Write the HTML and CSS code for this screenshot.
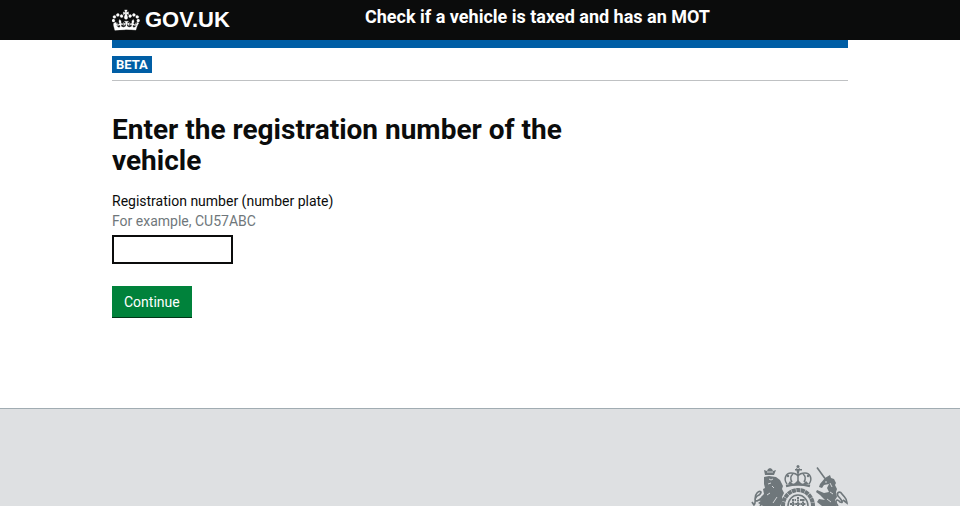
FILE: index.html
```
<!DOCTYPE html>
<html lang="en">
<head>
<meta charset="utf-8">
<meta name="viewport" content="width=device-width, initial-scale=1">
<title>Check if a vehicle is taxed and has an MOT</title>
<link rel="stylesheet" href="styles.css">
</head>
<body>
<header class="header">
  <div class="container header-row">
    <a class="logo" href="#">
      <svg class="crown" viewBox="0 3 36 28" aria-hidden="true"><path fill="currentColor" stroke="currentColor" stroke-width=".4" d="M6.7 12.2c1 .4 2.1-.1 2.5-1s-.1-2.1-1-2.5c-1-.4-2.1.1-2.5 1-.4 1 0 2.1 1 2.5m-4.3 2.5c1 .4 2.1-.1 2.5-1s-.1-2.1-1-2.5c-1-.4-2.1.1-2.5 1-.5 1 0 2.1 1 2.5m-1.3 4.800c1 .4 2.1-.1 2.5-1 .4-1-.1-2.1-1-2.5-1-.4-2.1.1-2.5 1-.4 1 0 2.1 1 2.5m10.4-5.800c1 .4 2.1-.1 2.5-1s-.1-2.1-1-2.5c-1-.4-2.1.1-2.5 1s0 2.1 1 2.5m17.4-1.5c-1 .4-2.1-.1-2.5-1s.1-2.1 1-2.5c1-.4 2.1.1 2.5 1 .5 1 0 2.1-1 2.5m4.3 2.5c-1 .4-2.1-.1-2.5-1s.1-2.1 1-2.5c1-.4 2.1.1 2.5 1 .5 1 0 2.1-1 2.5m1.3 4.800c-1 .4-2.1-.1-2.5-1-.4-1 .1-2.1 1-2.5 1-.4 2.1.1 2.5 1 .4 1 0 2.1-1 2.5m-10.400-5.800c-1 .4-2.1-.1-2.5-1s.1-2.1 1-2.5c1-.4 2.1.1 2.5 1s0 2.1-1 2.5m-5.300-4.900l2.4 1.3V6.5l-2.4.8c-.1-.1-.1-.2-.2-.3s1-3 1-3h-3.400l1 3c-.1.1-.2.2-.2.3-.1.1-2.4-.7-2.4-.7v3.5L17 8.800c.1.1.1.2.2.3l-1.4 4.2c-.1.2-.1.4-.1.6 0 1.1.8 2 1.9 2.2h.7c1-.2 1.9-1.1 1.9-2.1 0-.2 0-.4-.1-.6l-1.3-4.3c-.1-.2 0-.2.1-.3m-1 20.300c4.6 0 8.9.3 12.800.9 1.1-4.6 2.4-7.2 3.8-9.1l-2.6-.9c.3 1.3.3 1.9 0 2.7-.4-.4-.8-1.1-1.1-2.3l-1.2 4c.7-.5 1.3-.8 2-.9-1.1 2.5-2.6 3.1-3.5 3-1.1-.2-1.7-1.2-1.5-2.1.3-1.2 1.5-1.5 2.1-.1 1.1-2.3-.8-3-2-2.3 1.9-1.9 2.1-3.500.6-5.600-2.1 1.6-2.1 3.2-1.2 5.5-1.2-1.4-3.2-.6-2.5 1.6.9-1.4 2.1-.5 1.9.8-.2 1.1-1.7 2.1-3.5 1.9-2.7-.2-2.9-2.1-2.9-3.600.7-.1 1.9.5 2.9 1.9l.4-4.300c-1.1 1.1-2.1 1.4-3.2 1.4.4-1.2 2.1-3 2.1-3h-5.400s1.7 1.9 2.1 3c-1.1 0-2.1-.2-3.2-1.4l.4 4.300c1-1.4 2.2-2 2.9-1.9-.1 1.5-.2 3.4-2.9 3.600-1.9.2-3.400-.8-3.500-1.9-.2-1.3 1-2.2 1.9-.8.7-2.3-1.2-3-2.5-1.6.9-2.2.9-3.9-1.2-5.5-1.5 2-1.3 3.7.6 5.6-1.2-.7-3.1 0-2 2.3.6-1.4 1.8-1.1 2.1.1.2.9-.3 1.9-1.5 2.1-.9.2-2.4-.5-3.5-3 .6 0 1.2.3 2 .9l-1.2-4c-.3 1.1-.7 1.9-1.1 2.3-.3-.8-.2-1.4 0-2.7l-2.9.9C1.3 23 2.6 25.700 3.7 30.300c3.9-.6 8.2-.9 12.800-.9z"/></svg>
      <span>GOV.UK</span>
    </a>
    <a class="service" href="#">Check if a vehicle is taxed and has an MOT</a>
  </div>
</header>
<div class="container bar"></div>
<div class="container phase"><strong class="tag">BETA</strong></div>
<main class="container main">
  <form class="form">
    <h1>Enter the registration number of the vehicle</h1>
    <label for="vrm">Registration number (number plate)</label>
    <span class="hint" id="vrm-hint">For example, CU57ABC</span>
    <input id="vrm" name="vrm" type="text" aria-describedby="vrm-hint">
    <button type="button">Continue</button>
  </form>
</main>
<footer class="footer">
  <div class="container footer-row">
    <svg class="crest" viewBox="0 0 98 42" role="img" aria-label="Royal coat of arms">
      <g fill="none" stroke="currentColor" stroke-width="1.5">
        <path d="M37 20C33 15 36 9 41 9q5 0 7 3q2-3 7-3c5 0 8 6 4 11M42 18q-3-5 1-8M54 18q3-5-1-8M48 9v9"/>
        <path d="M36 22q12-3 24 0" stroke-width="2.5"/>
        <path d="M33 42a15 16 0 0 1 30 0" stroke-width="4" stroke-dasharray="4 .5"/>
        <path d="M38 42a10 11 0 0 1 20 0" stroke-width="1.5"/>
        <path d="M48 33v9M40 40h16M42 36h4m4 0h5M43 35v7m10-7v7" stroke-width="2" stroke-dasharray="2 .6"/>
        <path d="M10 42C14 37 11 34 7 37C3 37 6 32 9 31C13 28 10 26 7 29C3 33 7 38 4 41L2 38" stroke-width="1.7"/>
        <path d="M88 42C84 37 87 34 90 38C95 40 90 34 88 32C86 28 90 27 92 30C95 34 97 34 97 39L93 36" stroke-width="1.7"/>
        <path d="M67 3.500l8 11" stroke-width="1.600"/>
      </g>
      <g fill="currentColor">
        <circle cx="48" cy="2.500" r="1.500"/><path d="M46 4l2 1 2-1-1 5h-2zM45 5h7v1.500h-7z"/>
        <circle cx="38" cy="12" r="1.200"/><circle cx="58" cy="12" r="1.200"/>
        <path d="M44 20l4-4 4 4zM38 20l2-3 3 3zM53 20l3-3 3 3z"/>
        <path d="M15 11l-1-5 3 1 1-2 2-1 2 1 1 2 3-1-2 5z"/>
        <path d="M14 13l5-1 7 1 4 3 3 6-1 3 2 4-2 4 1 3-3 6H13l3-6-4 1 2-3-3-1 3-3-1-5 2-1-1-4z"/>
        <path d="M15 30l-6 5 3 1-4 3 5 3h6z"/>
        <path d="M75 14l5-3 1 3 3 1 2 4-1 2 2 4-1 3 1 5-2 3 2 6H72l-5-4 2-3 6 1-5-5-4-3 1-2 7 3 5-1-2-4 2-4-5 1-2 3-3-1 1-3z"/>
      </g>
      <g fill="none" stroke="#dee0e2">
        <path d="M17 8h6M19 15l2 1 2-1M18 20l3-1M22 22l2 2M17 31l3-2M27 33l-4 6M75 18h2M80 19l2 4M80 28l3 2M77 35l4 3" stroke-width=".9"/>
      </g>
    </svg>
  </div>
</footer>
</body>
</html>
```
FILE: styles.css
```
* { box-sizing: border-box; }

body {
  display: flex;
  flex-direction: column;
  min-height: 100vh;
  margin: 0;
  color: #0b0c0c;
  background: #fff;
  font-family: Roboto, "Liberation Sans", sans-serif;
  font-size: 14px;
  line-height: 20px;
}

.container {
  width: calc(100% - 224px);
  max-width: 960px;
  margin: 0 auto;
}

.header { color: #fff; background: #0b0c0c; }
.header a { color: inherit; text-decoration: none; }

.header-row {
  display: grid;
  grid-template-columns: 253px 1fr;
  height: 40px;
}

.logo {
  display: flex;
  align-items: center;
  gap: 5px;
  font: bold 22px/40px "Liberation Sans", sans-serif;
}

.crown { width: 28px; height: 22px; }

.service { font-size: 18px; font-weight: 700; line-height: 33px; }

.bar { height: 8px; background: #005ea5; }

.phase { padding: 8px 0 7px; border-bottom: 1px solid #bfc1c3; }

.tag {
  display: block;
  width: fit-content;
  padding: 0 4px;
  color: #fff;
  background: #005ea5;
  font-size: 13px;
  line-height: 17px;
}

.main { padding: 33px 0 90px; }

.form {
  display: flex;
  flex-direction: column;
  align-items: flex-start;
  width: 66%;
}

h1 {
  margin: 0 0 15px;
  font-size: 28px;
  line-height: 31px;
}

.hint { color: #6f777b; }

input {
  width: 121px;
  height: 29px;
  margin: 4px 0 22px;
  padding: 4px;
  border: 2px solid #0b0c0c;
  border-radius: 0;
  font: inherit;
}

button {
  height: 32px;
  padding: 0 12px;
  border: 0;
  border-bottom: 1px solid #003618;
  color: #fff;
  background: #00823b;
  font: inherit;
}

.footer {
  flex: 1;
  border-top: 1px solid #a1acb2;
  background: #dee0e2;
}

.footer-row { display: flex; justify-content: flex-end; padding-top: 55px; }

.crest { display: block; width: 98px; height: 42px; color: #6f777b; }
```
